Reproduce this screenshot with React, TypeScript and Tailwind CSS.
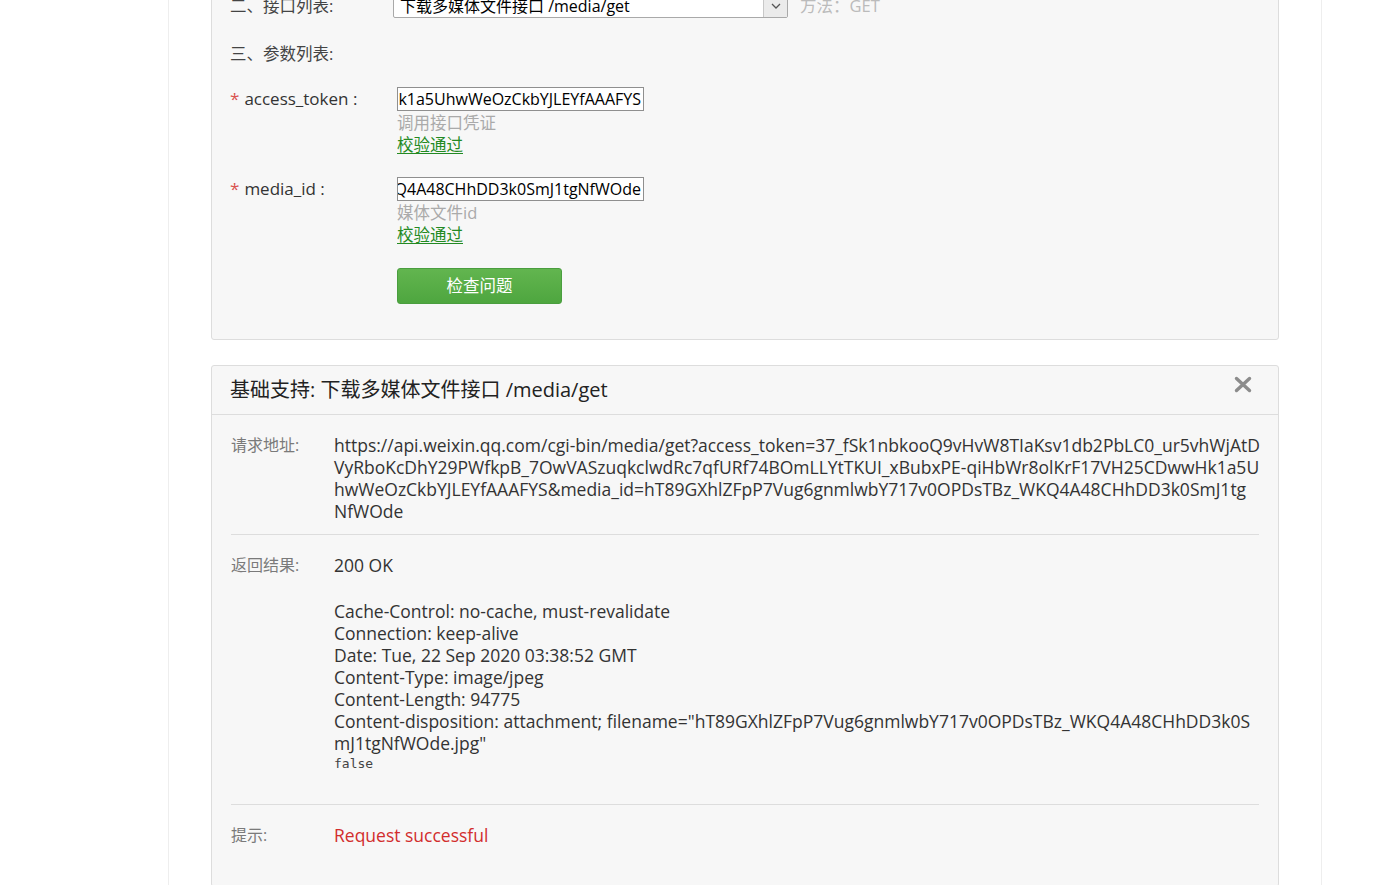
import React from "react";

const sans = "font-['Open_Sans','Noto_Sans_CJK_SC',sans-serif]";

function TokenInput({ value }: { value: string }) {
  return (
    <div className="w-[247px] h-6 border border-[#8f8f8f] bg-white flex justify-end items-center overflow-hidden px-[2px]">
      <span className="whitespace-nowrap text-[16px] text-black leading-none">{value}</span>
    </div>
  );
}

function Param({ name, value, hint }: { name: string; value: string; hint: string }) {
  return (
    <div className="flex">
      <div className="w-[167px] h-6 flex items-center text-[17px] text-[#333]">
        <span className="text-[#d9534f] mr-[5px]">*</span>
        {name}
      </div>
      <div className="flex flex-col">
        <TokenInput value={value} />
        <div className="mt-px leading-[22px] text-[16.5px] text-[#aaa]">{hint}</div>
        <div className="leading-[22px] text-[16.5px] text-[#238a23] underline underline-offset-2 w-fit">校验通过</div>
      </div>
    </div>
  );
}

function ResultRow({ label, children }: { label: string; children: React.ReactNode }) {
  return (
    <div className="flex">
      <div className="w-[103px] shrink-0 text-[16px] leading-[22px] text-[#7a7a7a]">{label}</div>
      <div className="flex-1 text-[17.5px] leading-[22px] text-[#333]">{children}</div>
    </div>
  );
}

export default function App() {
  return (
    <div className={`min-h-screen bg-white ${sans}`}>
      <div className="ml-[168px] w-[1154px] min-h-screen border-x border-[#eee] overflow-hidden">
        {/* request form */}
        <div className="mx-[42px] -mt-[30px] border border-[#ddd] rounded-[3px] bg-[#f7f7f7] px-[18px] pt-[23px] pb-[35px]">
          <div className="flex items-center h-6">
            <div className="w-[163px] text-[16.5px] text-[#444]">二、接口列表:</div>
            <div className="w-[395px] h-6 border border-[#a9a9a9] bg-white flex items-stretch rounded-[2px]">
              <div className="flex-1 pl-[6px] text-[16px] leading-[22px] text-black">下载多媒体文件接口 /media/get</div>
              <div className="w-[24px] bg-[#ebebeb] border-l border-[#c8c8c8] flex items-center justify-center">
                <svg width="10" height="6" viewBox="0 0 10 6">
                  <path d="M1 1l4 4 4-4" fill="none" stroke="#555" strokeWidth="1.3" />
                </svg>
              </div>
            </div>
            <div className="ml-[12px] text-[16.5px] text-[#bbb]">方法：GET</div>
          </div>

          <div className="mt-[25px] leading-[22px] text-[16.5px] text-[#444]">三、参数列表:</div>

          <div className="mt-[22px]">
            <Param name="access_token :" value="Hk1a5UhwWeOzCkbYJLEYfAAAFYS" hint="调用接口凭证" />
          </div>
          <div className="mt-[21px]">
            <Param name="media_id :" value="KQ4A48CHhDD3k0SmJ1tgNfWOde" hint="媒体文件id" />
          </div>

          <button className="mt-[22px] ml-[167px] w-[165px] h-[36px] rounded-[3px] border border-[#4a9e3f] bg-gradient-to-b from-[#62b54f] to-[#4ea63f] text-white text-[16.5px]">
            检查问题
          </button>
        </div>

        {/* result */}
        <div className="mx-[42px] mt-[25px] border border-[#ddd] rounded-[3px] bg-[#f7f7f7]">
          <div className="h-[49px] border-b border-[#ddd] px-[18px] flex justify-between">
            <div className="text-[20px] text-[#222] leading-[48px]">基础支持: 下载多媒体文件接口 /media/get</div>
            <svg className="mt-[10px] mr-[8px]" width="18" height="17" viewBox="0 0 18 17">
              <path d="M2.5 2.5l13 12M15.5 2.5l-13 12" stroke="#8c8c8c" strokeWidth="3.4" strokeLinecap="round" />
            </svg>
          </div>

          <div className="px-[19px] pt-[19px] pb-[40px]">
            <ResultRow label="请求地址:">
              <div className="whitespace-nowrap">https://api.weixin.qq.com/cgi-bin/media/get?access_token=37_fSk1nbkooQ9vHvW8TIaKsv1db2PbLC0_ur5vhWjAtD</div>
              <div className="whitespace-nowrap">VyRboKcDhY29PWfkpB_7OwVASzuqkclwdRc7qfURf74BOmLLYtTKUI_xBubxPE-qiHbWr8olKrF17VH25CDwwHk1a5U</div>
              <div className="whitespace-nowrap">hwWeOzCkbYJLEYfAAAFYS&amp;media_id=hT89GXhlZFpP7Vug6gnmlwbY717v0OPDsTBz_WKQ4A48CHhDD3k0SmJ1tg</div>
              <div className="whitespace-nowrap">NfWOde</div>
            </ResultRow>

            <div className="border-t border-[#ddd] mt-[12px] mb-[19px]" />

            <ResultRow label="返回结果:">
              <div>200 OK</div>
              <div className="h-[24px]" />
              <div>Cache-Control: no-cache, must-revalidate</div>
              <div>Connection: keep-alive</div>
              <div>Date: Tue, 22 Sep 2020 03:38:52 GMT</div>
              <div>Content-Type: image/jpeg</div>
              <div>Content-Length: 94775</div>
              <div className="whitespace-nowrap">Content-disposition: attachment; filename="hT89GXhlZFpP7Vug6gnmlwbY717v0OPDsTBz_WKQ4A48CHhDD3k0S</div>
              <div>mJ1tgNfWOde.jpg"</div>
              <div className="font-['DejaVu_Sans_Mono',monospace] text-[13px] leading-[20px] text-[#444]">false</div>
            </ResultRow>

            <div className="border-t border-[#ddd] mt-[30px] mb-[19px]" />

            <ResultRow label="提示:">
              <span className="text-[#d22d2d]">Request successful</span>
            </ResultRow>
          </div>
        </div>
      </div>
    </div>
  );
}
